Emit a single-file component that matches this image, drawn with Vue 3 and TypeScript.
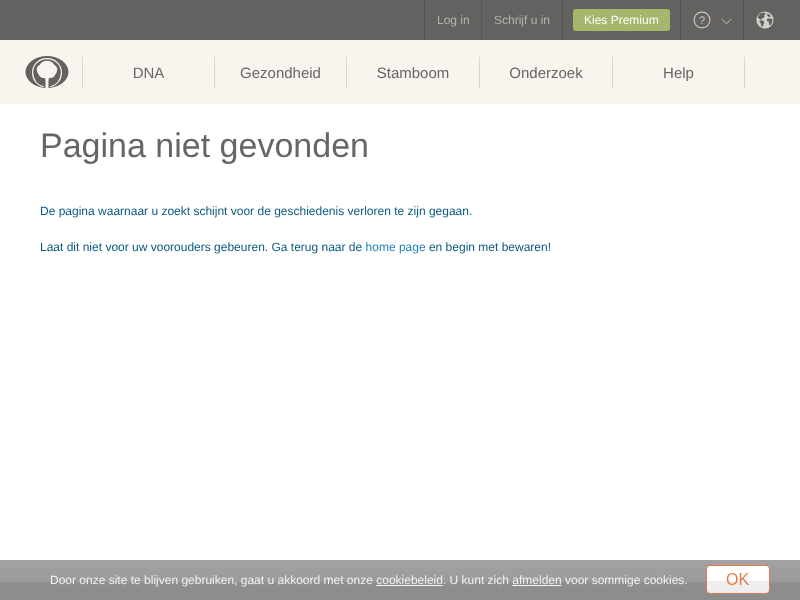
<script setup lang="ts">
const navItems: string[] = ['DNA', 'Gezondheid', 'Stamboom', 'Onderzoek', 'Help']
</script>

<template>
  <div class="page">
    <header class="topbar">
      <a class="top-link login"><span class="label">Log in</span></a>
      <a class="top-link signup"><span class="label">Schrijf u in</span></a>
      <div class="premium-cell"><a class="premium"><span class="label">Kies Premium</span></a></div>
      <div class="help-cell">
        <svg class="help-icon" width="18" height="18" viewBox="0 0 18 18">
          <circle cx="9" cy="9" r="7.9" fill="none" stroke="#c9c8c2" stroke-width="1.2" />
          <text x="9" y="12.8" text-anchor="middle" class="q">?</text>
        </svg>
        <svg class="chev" width="11" height="7" viewBox="0 0 11 7">
          <path d="M0.7 1 L5.5 5.8 L10.3 1" fill="none" stroke="#d2d1cb" stroke-width="0.9" />
        </svg>
      </div>
      <div class="globe-cell">
        <svg width="18" height="18" viewBox="0 0 18 18">
          <circle cx="9" cy="9" r="8.6" fill="#d2d1cb" />
          <path d="M5.2 1.9 L8.6 1.6 L9.6 3.2 L7.9 4.6 L8.7 6.2 L6.8 7 L5.2 8.7 L2.6 7.5 L1.7 6.2 Q2.8 3.4 5.2 1.9 Z" fill="#636260" />
          <path d="M3.8 9.2 L7 9.6 L8.4 11.2 L7.6 13.6 L6.4 15.9 L5.4 15.4 L4.9 12.6 L3.4 11 Z" fill="#636260" />
          <path d="M11.4 2.5 L13.4 3.4 L15.2 5.4 L12.7 6 L11 4.6 Z" fill="#636260" />
          <path d="M10.9 8 L14.2 7.2 L16.6 8.4 L16 11.8 L14.2 14.4 L13 13.6 L13 11 L10.8 10 Z" fill="#636260" />
        </svg>
      </div>
    </header>

    <nav class="mainnav">
      <div class="logo">
        <svg width="44" height="32" viewBox="0 0 44 32">
          <ellipse cx="22" cy="16" rx="21.5" ry="15.9" fill="#636260" />
          <path d="M18.5 30.6 C12 29.4 7.6 23.6 7.6 16.4 C7.6 8.6 14 2.6 22 2.6 C30 2.6 36.4 8.6 36.4 16.4 C36.4 23.6 32 29.4 25.5 30.6" fill="none" stroke="#f8f5ef" stroke-width="1.2" />
          <path d="M22 4.8 C18.2 4.8 15.8 6.6 14.8 8.8 C12.6 9.8 11.6 11.8 11.8 14 C12 16.2 12.8 17.4 13.6 18.4 C14.4 21 17.4 22.2 19.8 22 C20.6 23 20.6 25.4 20.4 32 L23.6 32 C23.4 25.4 23.4 23 24.2 22 C26.6 22.2 29.6 21 30.4 18.4 C31.2 17.4 32 16.2 32.2 14 C32.4 11.8 31.4 9.8 29.2 8.8 C28.2 6.6 25.8 4.8 22 4.8 Z" fill="#f8f5ef" />
        </svg>
      </div>
      <ul class="navlist">
        <li v-for="item in navItems" :key="item" class="navitem">{{ item }}</li>
      </ul>
    </nav>

    <main class="content">
      <h1>Pagina niet gevonden</h1>
      <p class="first">De pagina waarnaar u zoekt schijnt voor de geschiedenis verloren te zijn gegaan.</p>
      <p>Laat dit niet voor uw voorouders gebeuren. Ga terug naar de <a class="home">home page</a> en begin met bewaren!</p>
    </main>

    <div class="cookie">
      <span class="cookie-text">Door onze site te blijven gebruiken, gaat u akkoord met onze <a>cookiebeleid</a>. U kunt zich <a>afmelden</a> voor sommige cookies.</span>
      <button class="ok" type="button"><span class="label">OK</span></button>
    </div>
  </div>
</template>

<style>
html, body { margin: 0; padding: 0; background: #fff; overflow: hidden; }
</style>

<style scoped>
.page {
  position: relative;
  width: 800px;
  height: 600px;
  overflow: hidden;
  background: #fff;
  font-family: "Liberation Sans", Arial, sans-serif;
  text-rendering: geometricPrecision;
}
.label, .navitem, .content, .cookie-text { will-change: transform; }
.label { display: inline-block; }
.topbar {
  display: flex;
  justify-content: flex-end;
  height: 40px;
  background: #636260;
  box-sizing: border-box;
}
.top-link, .premium-cell, .help-cell, .globe-cell {
  display: flex;
  align-items: center;
  box-sizing: border-box;
  border-left: 1px solid #545351;
  height: 40px;
}
.top-link {
  justify-content: center;
  color: #b5b4af;
  font-size: 12px;
}
.login { width: 57px; }
.signup { width: 81px; }
.premium-cell { width: 118px; padding-left: 10px; }
.premium {
  display: block;
  width: 97px;
  height: 22px;
  line-height: 22px;
  text-align: center;
  border-radius: 3px;
  background: #a3b86c;
  color: #fff;
  font-size: 12px;
}
.help-cell { width: 63px; padding-left: 12px; }
.chev { margin-left: 10px; margin-top: 3px; }
.q { font: 11px "Liberation Sans", Arial, sans-serif; fill: #c9c8c2; }
.globe-cell { width: 57px; padding-left: 12px; }
.mainnav {
  display: flex;
  align-items: center;
  height: 64px;
  background: #f8f5ef;
}
.logo {
  display: flex;
  width: 82px;
  padding-left: 25px;
  box-sizing: border-box;
}
.navlist {
  display: flex;
  list-style: none;
  margin: 0;
  padding: 0;
  border-right: 1px solid #d9d6ce;
}
.navitem {
  width: 132px;
  height: 31px;
  padding-top: 1px;
  line-height: 31px;
  box-sizing: border-box;
  border-left: 1px solid #d9d6ce;
  text-align: center;
  color: #666666;
  font-size: 15px;
}
.navitem:nth-child(3), .navitem:nth-child(4) { width: 133px; }
.content {
  padding: 0 40px;
}
h1 {
  margin: 0;
  padding-top: 22px;
  font-weight: normal;
  font-size: 34px;
  line-height: 40px;
  color: #666666;
}
p {
  margin: 0 0 22px;
  font-size: 12px;
  line-height: 14px;
  color: #0a5a80;
}
p.first { margin-top: 38px; }
.home { color: #2283b8; }
.cookie {
  position: absolute;
  left: 0;
  right: 0;
  bottom: 0;
  height: 40px;
  display: flex;
  align-items: center;
  background: linear-gradient(to bottom, #a2a2a2 0, #9b9b9b 22px, #8f8f8f 22px, #8c8c8c 100%);
  color: #f2f2f2;
  font-size: 12px;
}
.cookie-text {
  margin-left: 50px;
  width: 656px;
}
.cookie-text a { text-decoration: underline; }
.ok {
  width: 64px;
  height: 29px;
  margin-top: -1px;
  padding: 0;
  box-sizing: border-box;
  border: 1px solid #e5794a;
  border-radius: 4px;
  background: linear-gradient(to bottom, #ffffff 0, #ffffff 55%, #eeeeee 55%, #eeeeee 100%);
  color: #e5794a;
  font: 16px "Liberation Sans", Arial, sans-serif;
}
</style>
